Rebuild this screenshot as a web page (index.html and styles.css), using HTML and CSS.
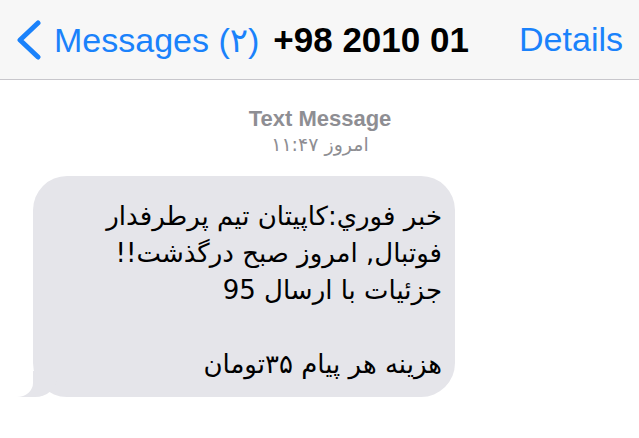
FILE: index.html
```html
<!DOCTYPE html>
<html lang="fa">
<head>
    <meta charset="UTF-8">
    <title>Messages</title>
    <link rel="stylesheet" href="styles.css">
</head>
<body>
    <header class="nav">
        <div class="nav-back">
            <svg class="chevron" width="28" height="40" viewBox="0 0 28 40">
                <path d="M24 3 L6 20 L24 37" fill="none" stroke="#1a82fb" stroke-width="5" stroke-linecap="round" stroke-linejoin="round"/>
            </svg>
            <span>Messages (۲)</span>
        </div>
        <div class="nav-title">+98 2010 01</div>
        <div class="nav-action">Details</div>
    </header>
    <main class="thread">
        <div class="stamp">
            <div class="stamp-kind">Text Message</div>
            <div class="stamp-time" dir="rtl">امروز ۱۱:۴۷</div>
        </div>
        <div class="bubble" dir="rtl">
            <p>خبر فوري:کاپيتان تيم پرطرفدار<br>فوتبال, امروز صبح درگذشت!!<br>جزئيات با ارسال 95<br><br>هزينه هر پيام ۳۵تومان</p>
        </div>
    </main>
</body>
</html>
```

FILE: styles.css
```css
body {
    margin: 0;
    background: #ffffff;
    font-family: "Liberation Sans", "DejaVu Sans", sans-serif;
}

.nav {
    height: 79px;
    background: #f7f7f7;
    border-bottom: 1px solid #c8c7cc;
    display: flex;
    align-items: center;
    padding: 0 16px 0 14px;
}

.nav-back {
    display: flex;
    align-items: center;
    color: #1a82fb;
    font-size: 34px;
}

.chevron {
    margin-right: 12px;
    margin-top: 1px;
}

.nav-title {
    margin-left: 14px;
    font-size: 35px;
    font-weight: bold;
    color: #000;
}

.nav-action {
    margin-left: auto;
    color: #1a82fb;
    font-size: 34px;
}

.thread {
    padding: 26px 0 0 33px;
}

.stamp {
    width: 574px;
    text-align: center;
    color: #8e8e93;
}

.stamp-kind {
    font-size: 22px;
    font-weight: bold;
    line-height: 26px;
}

.stamp-time {
    font-family: "DejaVu Sans", sans-serif;
    font-size: 19px;
    line-height: 24px;
}

.bubble {
    position: relative;
    margin-top: 20px;
    width: 422px;
    height: 221px;
    box-sizing: border-box;
    background: #e5e5ea;
    border-radius: 34px;
    padding: 22px 13px 0 0;
}

.bubble::before {
    content: "";
    position: absolute;
    left: -16px;
    bottom: 0;
    width: 40px;
    height: 26px;
    background: #e5e5ea;
    border-bottom-right-radius: 22px 20px;
}

.bubble::after {
    content: "";
    position: absolute;
    left: -26px;
    bottom: 0;
    width: 26px;
    height: 30px;
    background: #ffffff;
    border-bottom-right-radius: 16px 14px;
}

.bubble p {
    position: relative;
    z-index: 1;
    margin: 0;
    font-family: "DejaVu Sans", sans-serif;
    font-size: 26px;
    line-height: 37px;
    color: #000;
}
```
